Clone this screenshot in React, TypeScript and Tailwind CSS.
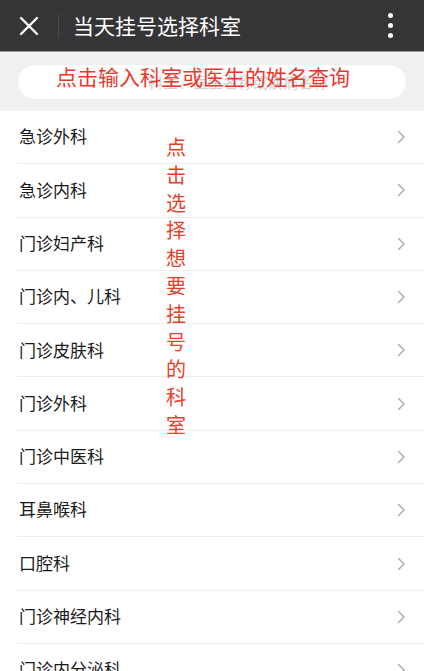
import React from "react";

const rows = [
  "急诊外科",
  "急诊内科",
  "门诊妇产科",
  "门诊内、儿科",
  "门诊皮肤科",
  "门诊外科",
  "门诊中医科",
  "耳鼻喉科",
  "口腔科",
  "门诊神经内科",
  "门诊内分泌科",
];

const vert = "点击选择想要挂号的科室".split("");

export default function App() {
  const font = { fontFamily: '"Noto Sans CJK SC", "Noto Sans", sans-serif' };
  return (
    <div className="w-[424px] h-[671px] overflow-hidden bg-white relative" style={font}>
      <div className="h-[52px] bg-[#353537] flex items-center border-b border-[#9a9a9a]">
        <div className="w-[58px] flex items-center justify-center">
          <svg width="22" height="22" viewBox="0 0 22 22">
            <path d="M3 3 L19 19 M19 3 L3 19" stroke="#fff" strokeWidth="2.4" strokeLinecap="round" />
          </svg>
        </div>
        <div className="w-px h-[24px] bg-[#4a4a4c]" />
        <div className="ml-[14px] text-white text-[21px] leading-none flex-1">当天挂号选择科室</div>
        <div className="w-[40px] flex flex-col items-center gap-[5px] mr-[14px]">
          <span className="w-[5px] h-[5px] rounded-full bg-white" />
          <span className="w-[5px] h-[5px] rounded-full bg-white" />
          <span className="w-[5px] h-[5px] rounded-full bg-white" />
        </div>
      </div>
      <div className="h-[59px] bg-[#f0f0f0] px-[18px] flex items-center">
        <div className="relative w-full h-[34px] rounded-full bg-white flex items-center justify-center">
          <span className="absolute left-[130px] top-[9px] text-[15px] leading-none text-[#cfcfcf]">科室、医生名称或疾病名称</span>
          <span className="relative -mt-[10px] -ml-[18px] text-[21px] leading-none text-[#e8382c]">点击输入科室或医生的姓名查询</span>
        </div>
      </div>
      <div className="flex flex-col">
        {rows.map((r) => (
          <div key={r} className="pl-[17px] ">
            <div className="h-[53.3px] border-b border-[#ececec] flex items-center pr-[18px]">
              <span className="pl-[2px] text-[17px] text-[#1a1a1a] flex-1 -mt-[2px]">{r}</span>
              <svg width="10" height="16" viewBox="0 0 10 16">
                <path d="M2 2 L8 8 L2 14" fill="none" stroke="#b0b0b0" strokeWidth="1.5" />
              </svg>
            </div>
          </div>
        ))}
      </div>
      <div className="absolute left-[166px] top-[133px] flex flex-col text-[20px] leading-[27.8px] text-[#e5422c]">
        {vert.map((c, i) => (
          <span key={i}>{c}</span>
        ))}
      </div>
    </div>
  );
}
